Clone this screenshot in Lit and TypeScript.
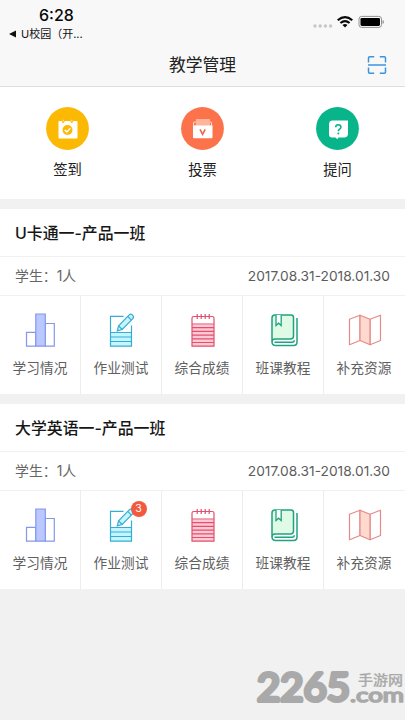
import { LitElement, html, svg, css, nothing } from "lit";
import { customElement, property } from "lit/decorators.js";

const actionIcons: Record<string, unknown> = {
  sign: svg`
    <path d="M12.500 14h3.200q.3 2 1.500 2t1.500-2h5.600q.3 2 1.500 2t1.500-2h3.200q1 0 1 1v15.500q0 1-1 1h-17q-1 0-1-1V15q0-1 1-1z" fill="#fff"/>
    <path d="M17.200 12.800v1.600M25.800 12.800v1.600" stroke="#ffe59a" stroke-width="1.200"/>
    <circle cx="21.500" cy="23" r="5" fill="#fbb904"/>
    <path d="M18.800 23l2 2 3.600-3.800" fill="none" stroke="#fff" stroke-width="1.500"/>`,
  vote: svg`
    <path d="M12.500 18v-2q0-1 1-1h16q1 0 1 1v2" fill="none" stroke="#ffe0d6" stroke-width="1"/>
    <rect x="15" y="12" width="14" height="6" fill="#ffb49c"/>
    <path d="M12 18.300h19.500v12q0 1-1 1H13q-1 0-1-1z" fill="#fff"/>
    <path d="M19 22.300l2.600 5 2.600-5" fill="none" stroke="#e8664a" stroke-width="1.600"/>`,
  ask: svg`
    <path d="M16.500 13.500H32v13q0 4-4 4h-5.500l-1.200 1.700-1.800-1.700H16q-3 0-3-3V17.500q0-4 3.500-4z" fill="#fff"/>
    <path d="M19.700 20.300q0-2.600 2.600-2.600t2.600 2.300q0 1.300-1.300 2.200t-1.300 2.100" fill="none" stroke="#08b58a" stroke-width="1.600"/>
    <circle cx="22.300" cy="26.500" r="1" fill="#08b58a"/>`,
};

const toolIcons: Record<string, unknown> = {
  chart: svg`<g stroke="#8597ea" stroke-width="1.200">
    <path d="M4.500 22.300h9.300v13.900H4.500z" fill="#fff"/>
    <path d="M23.300 13.500h9v22.700h-9z" fill="#fff"/>
    <path d="M13.800 4h9.500v32.200h-9.500z" fill="#bbc8ff"/></g>`,
  homework: svg`<g stroke="#36acd4" stroke-width="1.200" fill="none">
    <path d="M7.500 22.500h21v13.700h-21z" fill="#c5f6ff" stroke="none"/>
    <path d="M20.500 6.300h-13v29.900h21V15.500M7.500 22.500h21M7.500 27h21M7.500 31.500h21"/>
    <path d="M14.300 20.800l1.300-5L26.200 4.900q1.500-1.400 3.300 0.200t0.300 3.500L19.200 19.500z" fill="#c5f6ff"/>
    <path d="M15.600 15.800l3.600 3.700M24.700 6.400l3.700 3.700"/></g>`,
  score: svg`<g stroke="#e2506e" stroke-width="1.200" fill="none">
    <path d="M8 14.500h22v21.700H8z" fill="#ffc9d5" stroke="none"/>
    <path d="M8 36.200V8.300q0-1.800 1.800-1.800h18.400q1.800 0 1.800 1.800v27.900zM8 14h22M8 17.700h22M8 21.400h22M8 25.100h22M8 28.800h22M8 32.500h22M13.200 4v5M17.200 4v5M21.200 4v5M25.200 4v5"/></g>`,
  book: svg`<g stroke="#20a37f" stroke-width="1.500" fill="none">
    <path d="M10 5h16q2.500 0 2.500 2.500V26q0 3-3 3H10q-3 0-3 3V8q0-3 3-3z" fill="#dffbe5"/>
    <path d="M7 31.500q0 4 3.500 4h18q3.500 0 3.500-3.500V8M9.500 32.200h17.500q2.200 0 2.200-2"/>
    <path d="M11 5v10.500l2.600-2.300 2.600 2.300V5" fill="#fff" stroke-width="1.300"/></g>`,
  map: svg`<g stroke="#e48a88" stroke-width="1.200" fill="#fff" stroke-linejoin="round">
    <path d="M3.500 9.200L14 5.200v25.300L3.500 34.700zM24 9.200l10.500-4v25.300L24 34.700z"/>
    <path d="M14 5.200l10 4v25.500l-10-4.200z" fill="#ffd9cd"/></g>`,
};

@customElement("class-card")
export class ClassCard extends LitElement {
  @property() name = "";
  @property({ type: Number }) pending = 0;

  static styles = css`
    :host { display: block; background: #fff; height: 185px; }
    .title { height: 47px; line-height: 50px; padding-left: 15px; font-size: 15.900px; font-weight: 500; color: #161616; border-bottom: 1px solid #f1f1f1; }
    .info { height: 38px; line-height: 39px; padding: 0 15px; display: flex; justify-content: space-between; font-size: 13.900px; color: #666; border-bottom: 1px solid #f1f1f1; }
    .date { font-size: 13.750px; color: #5c5c5c; }
    .tools { display: grid; grid-template-columns: repeat(5, 81px); height: 98px; }
    .tool { box-sizing: border-box; border-right: 1px solid #ededed; padding-top: 14px; display: flex; flex-direction: column; align-items: center; }
    .tool:last-child { border-right-color: transparent; }
    .icon { position: relative; width: 37px; height: 38px; }
    .icon svg { display: block; }
    .badge { position: absolute; left: 28px; top: -4px; width: 16px; height: 16px; border-radius: 50%; background: #f2593f; color: #fff; font-size: 10.500px; line-height: 16px; text-align: center; }
    .label { margin-top: 10px; font-size: 13.700px; line-height: 20px; color: #606060; white-space: nowrap; }
  `;

  render() {
    const tools = [
      ["chart", "学习情况"], ["homework", "作业测试"], ["score", "综合成绩"],
      ["book", "班课教程"], ["map", "补充资源"],
    ];
    return html`
      <div class="title">${this.name}</div>
      <div class="info"><span>学生：1人</span><span class="date">2017.08.31-2018.01.30</span></div>
      <div class="tools">
        ${tools.map(([icon, label]) => html`
          <div class="tool">
            <div class="icon">
              <svg width="37" height="38" viewBox="0 0 37 38">${toolIcons[icon]}</svg>
              ${icon === "homework" && this.pending ? html`<span class="badge">${this.pending}</span>` : nothing}
            </div>
            <div class="label">${label}</div>
          </div>`)}
      </div>`;
  }
}

@customElement("app-root")
export class AppRoot extends LitElement {
  static styles = css`
    :host { display: flex; flex-direction: column; position: relative; width: 405px; height: 720px; overflow: hidden; background: #f1f1f1; font-family: Inter, "Noto Sans CJK SC", sans-serif; }
    .header { box-sizing: border-box; height: 87px; background: #f8f8f8; border-bottom: 1px solid #dedede; }
    .status { display: flex; justify-content: space-between; height: 43px; }
    .clock { padding: 5px 0 0 39px; font-size: 16px; line-height: 20px; font-weight: 500; color: #080808; }
    .back { display: flex; align-items: center; gap: 5px; padding: 1px 0 0 9px; font-size: 11px; line-height: 16px; color: #111; white-space: nowrap; }
    .signals { padding: 14px 20px 0 0; }
    .nav { display: grid; grid-template-columns: 1fr auto 1fr; align-items: center; height: 43px; }
    .heading { grid-column: 2; font-size: 16.800px; line-height: 24px; color: #222; }
    .scan { justify-self: end; margin-right: 18px; display: block; }
    .actions { display: grid; grid-template-columns: repeat(3, 135px); height: 112px; background: #fff; margin-bottom: 10px; }
    .action { display: flex; flex-direction: column; align-items: center; padding-top: 20px; font-size: 14.300px; line-height: 22px; color: #202020; }
    .action svg { margin-bottom: 9px; }
    class-card { margin-bottom: 10px; }
    .watermark { position: absolute; right: 0; bottom: 0; }
  `;

  render() {
    const actions = [["sign", "签到", "#fbb904"], ["vote", "投票", "#fc724a"], ["ask", "提问", "#08b58a"]];
    return html`
      <div class="header">
        <div class="status">
          <div>
            <div class="clock">6:28</div>
            <div class="back">
              <svg width="7" height="8" viewBox="0 0 7 8"><path d="M7 0.500v7L0 4z" fill="#111"/></svg>
              <span>U校园（开...</span>
            </div>
          </div>
          <svg class="signals" width="72" height="16" viewBox="0 0 72 16">
            <g fill="#c6c6c6"><circle cx="2" cy="12" r="1.700"/><circle cx="7.200" cy="12" r="1.700"/><circle cx="12.400" cy="12" r="1.700"/><circle cx="17.600" cy="12" r="1.700"/></g>
            <g fill="none" stroke="#080808" stroke-width="2.100"><path d="M24.700 6.200q7.300-6.200 14.600 0M27.400 9q4.600-3.900 9.200 0"/></g>
            <path d="M29.500 11q2.500-1.800 5 0L32 13.500z" fill="#080808"/>
            <rect x="46" y="2.400" width="22.500" height="11" rx="2.600" fill="none" stroke="#929292" stroke-width="1"/>
            <rect x="47.500" y="3.900" width="19.500" height="8" rx="1.300" fill="#000"/>
            <path d="M69.500 6v4q1.500-.6 1.500-2t-1.500-2" fill="#929292"/>
          </svg>
        </div>
        <div class="nav">
          <div class="heading">教学管理</div>
          <svg class="scan" width="20" height="20" viewBox="0 0 20 20"><path d="M1.500 7.500V3q0-1.200 1.200-1.200h4.500M12.800 1.800h4.500q1.200 0 1.200 1.200v4.500M1.500 12.500V17q0 1.200 1.200 1.200h4.500M12.800 18.200h4.500q1.200 0 1.200-1.200v-4.500M1 10h18" fill="none" stroke="#3d94dd" stroke-width="1.500"/></svg>
        </div>
      </div>
      <div class="actions">
        ${actions.map(([icon, label, color]) => html`
          <div class="action">
            <svg width="43" height="43" viewBox="0 0 43 43"><circle cx="21.500" cy="21.500" r="21.400" fill=${color}/>${actionIcons[icon]}</svg>
            <span>${label}</span>
          </div>`)}
      </div>
      <class-card name="U卡通一-产品一班"></class-card>
      <class-card name="大学英语一-产品一班" .pending=${3}></class-card>
      <svg class="watermark" width="155" height="60" viewBox="250 660 155 60" fill="#a9a9a9" stroke="#a9a9a9" stroke-linejoin="round" stroke-linecap="round">
        <text x="257" y="700.500" font-family="Lato" font-size="38.500" font-weight="400" stroke-width="4" textLength="93" lengthAdjust="spacingAndGlyphs">2265</text>
        <text x="358" y="685" font-size="14" font-weight="500" stroke-width="0.200" textLength="45" lengthAdjust="spacingAndGlyphs">手游网</text>
        <text x="350" y="701.500" font-family="Lato" font-size="20" font-weight="400" stroke-width="1.600" textLength="54" lengthAdjust="spacingAndGlyphs">.com</text>
      </svg>`;
  }
}
